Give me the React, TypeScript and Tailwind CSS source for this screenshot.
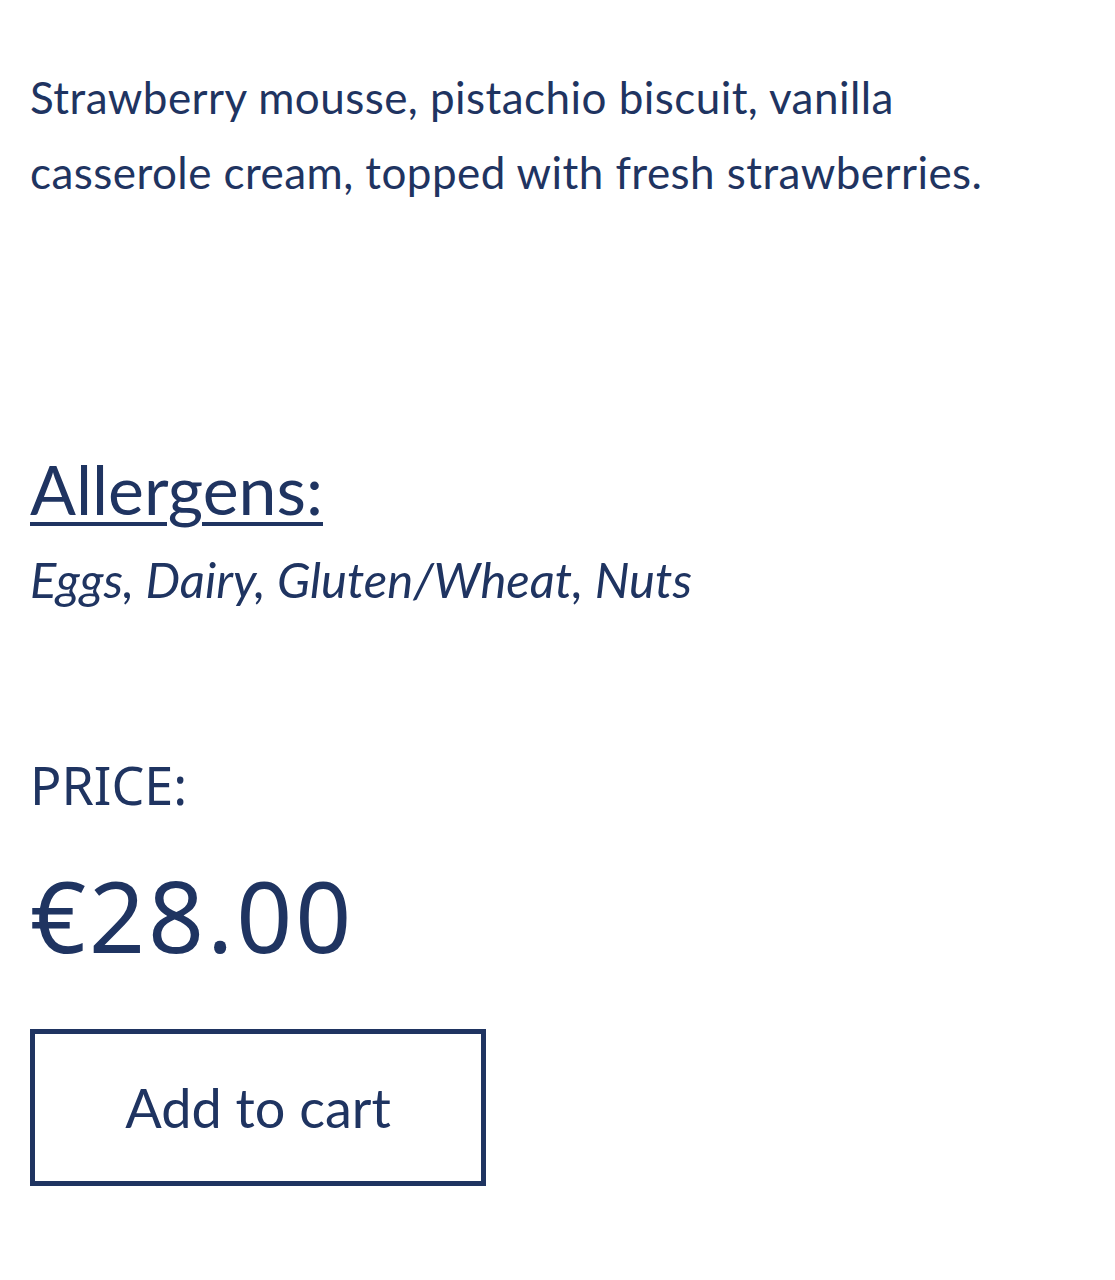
import React from "react";

const navy = "text-[#1f3461]";

export default function App() {
  return (
    <div className="min-h-screen bg-white px-[30px] pt-[60px] font-['Lato',sans-serif]">
      <p className={`${navy} text-[44px] leading-[75px] tracking-[0.01em]`}>
        Strawberry mousse, pistachio biscuit, vanilla casserole cream, topped with fresh strawberries.
      </p>

      <div className="mt-[241px]">
        <h2 className={`${navy} text-[68px] leading-[76px] underline decoration-[4px] underline-offset-[7px]`}>
          Allergens:
        </h2>
        <p className={`${navy} mt-[17px] italic text-[49px] leading-[70px]`}>Eggs, Dairy, Gluten/Wheat, Nuts</p>
      </div>

      <div className="mt-[141px] font-['Noto_Sans',sans-serif]">
        <p className={`${navy} text-[52px] leading-[60px]`}>PRICE:</p>
        <p className={`${navy} mt-[45px] text-[98px] leading-[110px] tracking-[0.03em]`}>€28.00</p>
      </div>

      <button
        className={`${navy} block mt-[59px] w-[456px] h-[157px] border-[5px] border-[#1f3461] text-[54px] font-['Lato',sans-serif]`}
      >
        Add to cart
      </button>
    </div>
  );
}
